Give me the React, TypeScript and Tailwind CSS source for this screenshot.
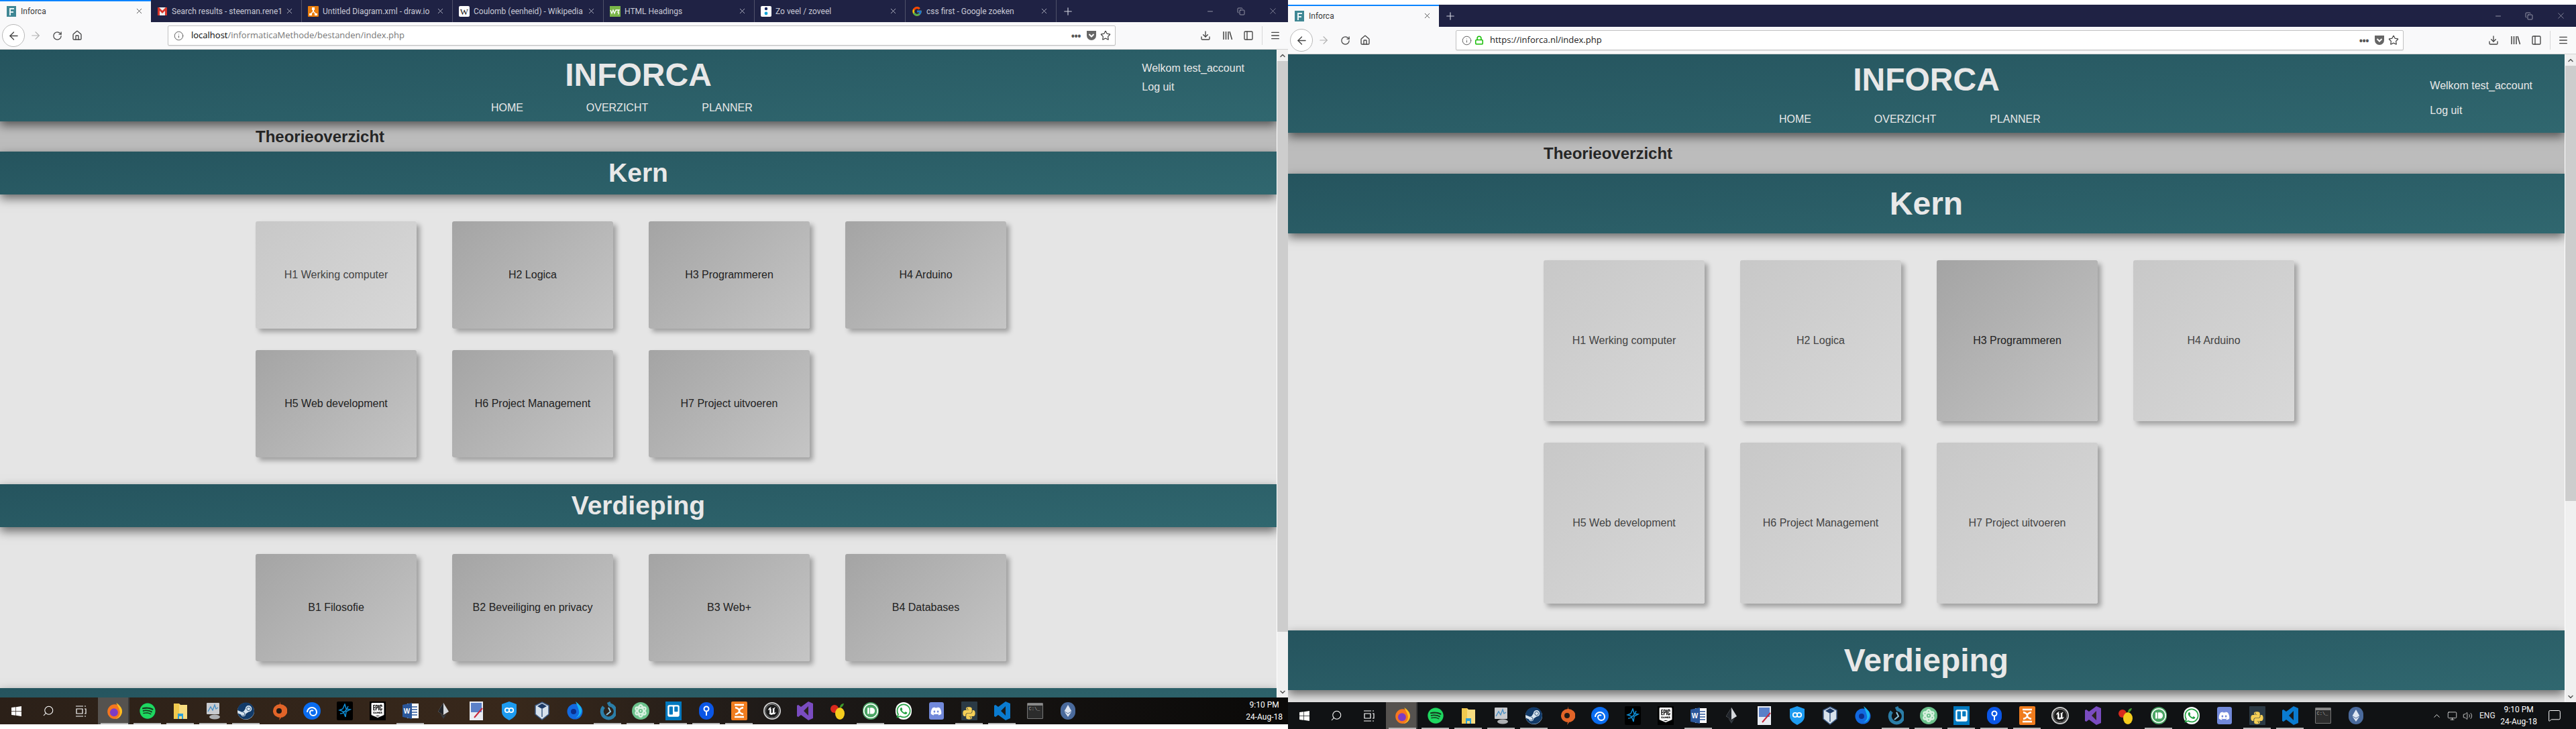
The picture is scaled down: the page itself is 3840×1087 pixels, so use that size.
import type { ReactNode } from 'react';
import { ArrowLeft, ArrowRight, RotateCw, Home, Info, Lock, Star, Download, PanelLeft, Menu, X, Plus, Minus, Copy, ChevronUp, ChevronDown, Search, Monitor, Volume2, MessageSquare } from 'lucide-react';
import { FaSpotify, FaSteam, FaWindows, FaTrello, FaWhatsapp, FaDiscord, FaPython, FaEthereum, FaAtom } from 'react-icons/fa';
import { FcGoogle } from 'react-icons/fc';
import { SiEpicgames, SiUnrealengine, SiPushbullet } from 'react-icons/si';

const Favicons = {
  inforca: (
    <svg width="16" height="16" viewBox="0 0 16 16"><rect x="1" width="14" height="16" fill="#3f8794" /><path d="M5 3h7v2H7v3h4v2H7v4H5z" fill="#e8f2f4" /></svg>
  ),
  gmail: (
    <svg width="16" height="16" viewBox="0 0 16 16"><rect x="1" y="2" width="14" height="12" fill="#eee" /><path d="M1 2h2l5 5 5-5h2v12h-3V7L8 11 4 7v7H1z" fill="#d8352a" /></svg>
  ),
  drawio: (
    <svg width="16" height="16" viewBox="0 0 16 16"><rect width="16" height="16" rx="1" fill="#e97d0d" /><path d="M6 2h4v4H9v2l3 3h2v3h-4v-3L8 9l-2 2v3H2v-3h2l3-3V6H6z" fill="#fff" /></svg>
  ),
  wiki: (
    <svg width="16" height="16" viewBox="0 0 16 16"><rect width="16" height="16" rx="2" fill="#fff" /><text x="8" y="13" fontSize="13" textAnchor="middle" fontFamily="'Liberation Serif', serif" fill="#111">W</text></svg>
  ),
  w3: (
    <svg width="16" height="16" viewBox="0 0 16 16"><rect width="16" height="16" fill="#7ab648" /><path d="M1 6l2 5 2-5 2 5 2-5h5l-2 3c2 0 2 3 0 3" stroke="#fff" strokeWidth="1.3" fill="none" /></svg>
  ),
  zoveel: (
    <svg width="16" height="16" viewBox="0 0 16 16"><rect width="16" height="16" rx="2" fill="#fff" /><circle cx="8" cy="4" r="2.2" fill="#14235c" /><circle cx="8" cy="11" r="2.4" fill="#12a5d8" /></svg>
  ),
};

function Tab({ icon, title, active }: { icon: ReactNode; title: string; active?: boolean }) {
  return (
    <div className={`relative flex h-full w-[225px] shrink-0 items-center pl-[9px] pr-[11px] ${active ? 'bg-[#f9f9fa] text-[#3a3a3a]' : 'border-r border-[#4f5169] text-[#c9cad6]'}`}>
      {active && <div className="absolute inset-x-0 top-0 h-[2px] bg-[#0a84ff]" />}
      <span className="w-[22px] shrink-0">{icon}</span>
      <span className="min-w-0 flex-1 overflow-hidden font-['Roboto',sans-serif] text-[12px] whitespace-nowrap">{title}</span>
      <X size={13} strokeWidth={1.5} className="ml-[4px] shrink-0" />
    </div>
  );
}

function WindowControls() {
  return (
    <div className="ml-auto flex items-center text-[#b9bac6]">
      <Minus size={12} strokeWidth={1.5} className="mr-[34px]" />
      <Copy size={12} strokeWidth={1.5} className="mr-[34px]" />
      <X size={15} strokeWidth={1} className="mr-[15px]" />
    </div>
  );
}

function Toolbar({ url }: { url: ReactNode }) {
  return (
    <div className="flex h-[41px] items-center border-b border-[#d4d4d4] bg-[#f9f9fa] text-[#444]">
      <div className="ml-[3px] flex h-[34px] w-[34px] items-center justify-center rounded-full border border-[#b8b8b8] bg-white">
        <ArrowLeft size={19} strokeWidth={1.7} />
      </div>
      <ArrowRight size={18} strokeWidth={1.5} className="ml-[7px] text-[#b0b0b0]" />
      <RotateCw size={15} strokeWidth={2} className="ml-[16px]" />
      <Home size={16} strokeWidth={2} className="ml-[14px]" />
      <div className="ml-[127px] flex h-[30px] w-[1413px] items-center rounded-[2px] border border-[#c2c2c2] bg-white pr-[6px] pl-[8px] font-['Open_Sans',sans-serif] text-[13px] shadow-[0_1px_1px_rgba(0,0,0,0.08)]">
        {url}
        <div className="ml-auto flex items-center">
          <span className="text-[14px] font-bold tracking-[-0.5px] text-[#555]">•••</span>
          <svg width="16" height="16" viewBox="0 0 16 16" className="ml-[8px]"><path d="M1 1h14v7a7 7 0 0 1-14 0z" fill="#666" /><path d="M4.5 6L8 9.5 11.5 6" stroke="#fff" strokeWidth="2" fill="none" /></svg>
          <Star size={16} strokeWidth={1.8} className="ml-[5px]" />
        </div>
      </div>
      <Download size={16} strokeWidth={2} className="ml-[126px]" />
      <svg width="16" height="16" viewBox="0 0 16 16" className="ml-[17px]" stroke="#444" strokeWidth="1.5" fill="none"><path d="M2 2v12M5.5 2v12M9 2v12M11 2l3.5 12" /></svg>
      <PanelLeft size={16} strokeWidth={2} className="ml-[15px]" />
      <div className="ml-[12px] h-[28px] w-px bg-[#d8d8d8]" />
      <Menu size={16} strokeWidth={2} className="ml-[11px]" />
    </div>
  );
}

function Card({ label, dark, tall }: { label: string; dark?: boolean; tall?: boolean }) {
  return (
    <div className={`flex w-[240px] items-center justify-center rounded-[3px] text-[16px] shadow-[5px_5px_7px_rgba(0,0,0,0.3)] ${tall ? 'h-[240px]' : 'h-[160px]'} ${dark ? 'bg-[linear-gradient(135deg,#a4a4a4,#c5c5c5)] text-[#222]' : 'bg-[linear-gradient(135deg,#c8c8c8,#d8d8d8)] text-[#444]'}`}>
      {label}
    </div>
  );
}

function Band({ title, big }: { title: string; big?: boolean }) {
  return (
    <div className={`relative z-10 flex items-center justify-center bg-[linear-gradient(176deg,#25545e,#30676f)] font-bold text-[#e8e8e8] shadow-[0_6px_14px_rgba(0,0,0,0.55)] ${big ? 'h-[89px] text-[48px]' : 'h-[64px] text-[39px]'}`}>
      {title}
    </div>
  );
}

function Scrollbar({ thumb }: { thumb: number }) {
  return (
    <div className="flex w-[17px] shrink-0 flex-col items-center border-l border-white bg-[#f0f0f0] text-[#555]">
      <div className="flex h-[17px] items-center"><ChevronUp size={12} strokeWidth={3} /></div>
      <div className="w-full bg-[#cdcdcd]" style={{ height: thumb }} />
      <div className="mt-auto flex h-[17px] items-center"><ChevronDown size={12} strokeWidth={3} /></div>
    </div>
  );
}

function Page({ big, darkCards }: { big?: boolean; darkCards: string[] }) {
  const kern = ['H1 Werking computer', 'H2 Logica', 'H3 Programmeren', 'H4 Arduino', 'H5 Web development', 'H6 Project Management', 'H7 Project uitvoeren'];
  const verdieping = ['B1 Filosofie', 'B2 Beveiliging en privacy', 'B3 Web+', 'B4 Databases'];
  const grid = 'grid grid-cols-[repeat(4,240px)] gap-x-[53px] gap-y-[32px] py-10 pl-[381px]';

  return (
    <div className="flex min-h-0 flex-1">
      <div className="min-w-0 flex-1 overflow-hidden bg-[#e5e5e5]">
        <header className={`relative z-10 grid grid-cols-[1fr_auto_1fr] bg-[linear-gradient(176deg,#25545e,#30676f)] text-[#e8e8e8] shadow-[0_6px_14px_rgba(0,0,0,0.55)] ${big ? 'h-[117px]' : 'h-[107px]'}`}>
          <div />
          <div className="flex flex-col items-center pt-[10px]">
            <div className="text-[48px] leading-[55px] font-bold">INFORCA</div>
            <nav className={`mr-[63px] flex text-[16px] leading-[18px] ${big ? 'mt-[23px]' : 'mt-[13px]'}`}>
              <span className="w-[164px] text-center">HOME</span>
              <span className="w-[164px] text-center">OVERZICHT</span>
              <span className="w-[164px] text-center">PLANNER</span>
            </nav>
          </div>
          <div className={`mr-[48px] flex flex-col justify-self-end text-[16px] leading-[18px] ${big ? 'gap-[19px] pt-[38px]' : 'gap-[10px] pt-[19px]'}`}>
            <span>Welkom test_account</span>
            <span>Log uit</span>
          </div>
        </header>
        <div className={`flex items-center bg-[#bcbcbc] pl-[381px] text-[24px] font-bold text-[#262626] ${big ? 'h-[61px]' : 'h-[45px]'}`}>
          Theorieoverzicht
        </div>
        <Band title="Kern" big={big} />
        <div className={grid}>
          {kern.map((k) => <Card key={k} label={k} tall={big} dark={darkCards.includes(k)} />)}
        </div>
        <Band title="Verdieping" big={big} />
        {/* the big window is scrolled off before these, nothing of them shows */}
        {!big && (
          <>
            <div className={grid}>
              {verdieping.map((k) => <Card key={k} label={k} dark={darkCards.includes(k)} />)}
            </div>
            <div className="relative z-10 h-[64px] bg-[linear-gradient(176deg,#25545e,#30676f)] shadow-[0_6px_14px_rgba(0,0,0,0.55)]" />
          </>
        )}
      </div>
      <Scrollbar thumb={big ? 649 : 851} />
    </div>
  );
}

function Glyph({ children, on }: { children: ReactNode; on?: boolean }) {
  return (
    <div className={`relative flex h-full w-[49px] shrink-0 items-center justify-center ${on ? 'after:absolute after:inset-x-[4px] after:bottom-0 after:h-[2px] after:bg-[#b5b5b5]' : ''}`}>
      {children}
    </div>
  );
}

const taskIcons: { node: ReactNode; on?: boolean }[] = [
  { on: true, node: <svg width="26" height="26" viewBox="0 0 24 24"><circle cx="12" cy="13" r="10" fill="#f5761f" /><circle cx="11" cy="14" r="5.5" fill="#7d3bc4" /><path d="M14 1c5 3 9 8 8 13-1 5-5 9-9 9 5-2 7-6 6-11-1-4-3-7-5-11z" fill="#ffbf1f" /></svg> },
  { on: true, node: <span className="flex h-[24px] w-[24px] items-center justify-center rounded-full bg-[#17381f]"><FaSpotify size={24} className="text-[#1ed760]" /></span> },
  { on: true, node: <svg width="24" height="28" viewBox="0 0 24 28"><path d="M2 3h8l2 2h10v21H2z" fill="#f7dc80" /><path d="M2 3h8v23H2z" fill="#f0c94e" /><path d="M8 18h8v8h-2v-4h-4v4H8z" fill="#2d9fd8" /></svg> },
  { on: true, node: <svg width="26" height="28" viewBox="0 0 26 28"><rect x="3" y="2" width="19" height="17" rx="1" fill="#c9cbcf" /><path d="M5 15l4-7 3 5 3-8 2 6 3-2" stroke="#4a90c4" strokeWidth="1.4" fill="none" /><ellipse cx="15" cy="23" rx="8" ry="3.5" fill="#aeb0b3" /></svg> },
  { on: true, node: <span className="flex h-[25px] w-[25px] items-center justify-center rounded-full bg-[#d6e3ee]"><FaSteam size={26} className="text-[#123a68]" /></span> },
  { node: <svg width="24" height="28" viewBox="0 0 24 28"><path d="M14 0l-1 4a11 10 0 1 0 2 20l-3 4 1-4A11 10 0 0 0 14 4z" fill="#e26428" /><circle cx="12" cy="14" r="4" fill="#1f1a16" /></svg> },
  { node: <span className="flex h-[26px] w-[26px] items-center justify-center rounded-full bg-[#0a6cf0]"><svg width="18" height="18" viewBox="0 0 18 18" fill="none" stroke="#fff" strokeWidth="2"><path d="M2 11a7 7 0 1 1 14 0 5 5 0 0 1-10 0 3 3 0 0 1 5-2" /></svg></span> },
  { node: <span className="flex h-[28px] w-[24px] items-center justify-center rounded-[2px] bg-black"><svg width="20" height="22" viewBox="0 0 20 22" fill="none" stroke="#0f8fd8" strokeWidth="1.5"><path d="M10 1L7 8l-5 2 6 2 3 8 1-8 6-3-6-1zM3 15c4 1 10-5 12-11" /></svg></span> },
  { node: <span className="flex h-[28px] w-[24px] items-center justify-center bg-black pb-[2px]"><SiEpicgames size={22} className="text-white" /></span> },
  { on: true, node: <svg width="26" height="26" viewBox="0 0 26 26"><rect x="8" y="2" width="17" height="22" fill="#fff" /><path d="M13 7h10M13 11h10M13 15h10M13 19h10" stroke="#2b579a" strokeWidth="1.5" /><path d="M1 4l14-3v24L1 22z" fill="#2b579a" /><text x="7.5" y="16.5" fontSize="10" fontWeight="700" fill="#fff" textAnchor="middle" fontFamily="'Liberation Sans', sans-serif">W</text></svg> },
  { node: <svg width="22" height="26" viewBox="0 0 22 26"><path d="M11 1l8 13-8 5-8-5z" fill="#d5d8dc" /><path d="M11 1v18l-8-5z" fill="#20242a" /><path d="M6 17l5 3 5-3-5 8z" fill="#353a40" /></svg> },
  { node: <svg width="22" height="28" viewBox="0 0 22 28"><rect x="1" width="20" height="28" fill="#e9ecf2" /><rect x="3" y="2" width="16" height="14" fill="#5a80c8" /><path d="M8 24l12-14" stroke="#c8283c" strokeWidth="2" /></svg> },
  { node: <svg width="24" height="28" viewBox="0 0 24 28"><path d="M12 0l11 4v11c0 6-5 10-11 13C6 25 1 21 1 15V4z" fill="#1d9bf0" /><circle cx="9" cy="13" r="3.2" fill="none" stroke="#fff" strokeWidth="1.8" /><circle cx="15" cy="13" r="3.2" fill="none" stroke="#fff" strokeWidth="1.8" /></svg> },
  { node: <svg width="24" height="28" viewBox="0 0 24 28"><path d="M12 1l10 5v13l-10 8-10-8V6z" fill="#d8e2ec" stroke="#3c5a84" strokeWidth="1.5" /><path d="M12 3l7 4-7 4-7-4z" fill="#1e3a66" /><path d="M12 11v12" stroke="#3c5a84" strokeWidth="1.5" /></svg> },
  { node: <svg width="24" height="28" viewBox="0 0 24 28"><circle cx="12" cy="15" r="11.5" fill="#1269e0" /><path d="M13 0c5 4 10 8 9 15-1 5-5 9-9 9 4-2 6-6 5-10-1-5-3-9-5-14z" fill="#19b4ef" /><circle cx="10" cy="15" r="4" fill="#0b2f8c" /></svg> },
  { on: true, node: <svg width="24" height="28" viewBox="0 0 24 28" fill="none"><path d="M13 1l2 4a10 10 0 1 1-9 3" stroke="#2b7ea8" strokeWidth="5" /><path d="M13 9l3 6-6 5" stroke="#8cc5df" strokeWidth="2" /></svg> },
  { on: true, node: <span className="flex h-[26px] w-[26px] items-center justify-center rounded-full bg-[#6cc28c]"><FaAtom size={20} className="text-[#d8f0df]" /></span> },
  { on: true, node: <span className="flex h-[28px] w-[24px] items-center justify-center bg-[#0079bf]"><FaTrello size={20} className="text-white" /></span> },
  { on: true, node: <span className="flex h-[26px] w-[22px] items-center justify-center rounded-full bg-[#0a56e6]"><svg width="12" height="16" viewBox="0 0 12 16"><circle cx="6" cy="5" r="3.5" fill="none" stroke="#fff" strokeWidth="2" /><path d="M6 9v6" stroke="#fff" strokeWidth="2" /></svg></span> },
  { on: true, node: <span className="flex h-[28px] w-[24px] items-center justify-center rounded-[2px] bg-[#f07c1e]"><svg width="18" height="22" viewBox="0 0 18 22" fill="none" stroke="#fff" strokeWidth="2.4"><path d="M2 2h14M2 20h14M3 6c8 2 8 8 0 10M15 6c-8 2-8 8 0 10" /></svg></span> },
  { node: <span className="flex h-[26px] w-[26px] items-center justify-center rounded-full border-2 border-[#ccc] bg-[#1a1a1a]"><SiUnrealengine size={20} className="text-white" /></span> },
  { node: <svg width="24" height="28" viewBox="0 0 24 28"><path d="M17 0l7 3v22l-7 3-11-8-4 3-2-1V6l2-1 4 3z" fill="#7a4cc0" /><path d="M17 7v14l-7-7z" fill="#2b2420" /></svg> },
  { node: <svg width="24" height="28" viewBox="0 0 24 28"><circle cx="7" cy="11" r="6" fill="#d8291e" /><ellipse cx="15" cy="18" rx="7" ry="9" fill="#f4cc1d" /><path d="M15 9c0-4 3-6 6-6-1 4-3 6-6 6z" fill="#3f9a2d" /></svg> },
  { on: true, node: <span className="flex h-[26px] w-[24px] items-center justify-center rounded-full bg-[#4aa564]"><SiPushbullet size={22} className="text-white" /></span> },
  { node: <span className="flex h-[26px] w-[24px] items-center justify-center rounded-full bg-white"><FaWhatsapp size={24} className="text-[#25a244]" /></span> },
  { node: <span className="flex h-[26px] w-[22px] items-center justify-center rounded-[3px] bg-[#7289da]"><FaDiscord size={17} className="text-white" /></span> },
  { on: true, node: <span className="relative flex h-[28px] w-[24px] items-end justify-center rounded-[1px] bg-[#2b3a45]"><FaPython size={21} className="text-[#f5cf56]" /></span> },
  { on: true, node: <svg width="24" height="28" viewBox="0 0 24 28"><path d="M17 0l7 3v22l-7 3-11-8-4 3-2-1V6l2-1 4 3z" fill="#0a7bd0" /><path d="M17 7v14l-7-7z" fill="#1b1b1b" /></svg> },
  { node: <span className="flex h-[24px] w-[24px] flex-col rounded-[1px] border border-[#777] bg-[#2c2c2c]"><span className="h-[3px] bg-[#8a8a8a]" /><span className="pl-[2px] font-['Liberation_Mono',monospace] text-[7px] leading-[10px] text-[#aaa]">C:\_</span></span> },
  { node: <span className="flex h-[26px] w-[22px] items-center justify-center rounded-full bg-[#4a6a9c]"><FaEthereum size={18} className="text-[#dfe6f2]" /></span> },
];

function Taskbar({ tray, left }: { tray?: boolean; left?: boolean }) {
  return (
    <div className={`flex h-[40px] shrink-0 items-center text-white ${left ? 'bg-[linear-gradient(90deg,#2b2018,#38281b_40%,#1e1a18_60%,#0a0908)]' : 'bg-[#101214]'}`}>
      <div className="flex h-full w-[48px] items-center justify-center"><FaWindows size={17} /></div>
      <div className="flex h-full w-[48px] items-center justify-center"><Search size={18} strokeWidth={1.4} className="-scale-x-100" /></div>
      <div className="flex h-full w-[48px] items-center justify-center">
        <svg width="17" height="17" viewBox="0 0 17 17" fill="none" stroke="#fff" strokeWidth="1.2"><path d="M1 1h11M1 16h11M2 5h9v7H2zM14 1h2M14 5h2v7h-2M14 16h2" /></svg>
      </div>
      <div className="ml-[2px] flex h-full w-[1470px] shrink-0">
        {taskIcons.map((t, i) => (
          <div key={i} className={i === 0 ? 'h-full w-[49px] bg-[linear-gradient(90deg,#55524f_45px,#3a3a3a_45px,#3a3a3a_47px,transparent_47px)]' : 'h-full w-[49px]'}>
            <Glyph on={t.on}>{t.node}</Glyph>
          </div>
        ))}
      </div>
      {tray && (
        <div className="ml-[89px] flex shrink-0 items-center text-[#ececec]">
          <ChevronUp size={15} strokeWidth={1.5} />
          <Monitor size={15} strokeWidth={1.3} className="ml-[8px]" />
          <Volume2 size={15} strokeWidth={1.3} className="ml-[8px]" />
          <span className="ml-[10px] font-['Roboto',sans-serif] text-[12px]">ENG</span>
        </div>
      )}
      <div className="ml-auto flex shrink-0 flex-col items-center font-['Roboto',sans-serif] text-[12px] leading-[18px] whitespace-nowrap text-white">
        <span>9:10 PM</span>
        <span>24-Aug-18</span>
      </div>
      {tray ? <MessageSquare size={20} strokeWidth={1.2} className="mr-[22px] ml-[16px] shrink-0" /> : <div className="w-[8px] shrink-0" />}
    </div>
  );
}

export default function App() {
  const urlStyle = 'whitespace-nowrap';
  return (
    <div className="flex h-[1087px] w-[3840px] overflow-hidden bg-white font-['Liberation_Sans',Arial,sans-serif]">
      {/* local copy */}
      <div className="flex h-[1087px] w-[1920px] shrink-0 flex-col pb-[7px]">
        <div className="flex h-[33px] shrink-0 items-center bg-[#1f2244]">
          <Tab active icon={Favicons.inforca} title="Inforca" />
          <Tab icon={Favicons.gmail} title="Search results - steeman.rene1" />
          <Tab icon={Favicons.drawio} title="Untitled Diagram.xml - draw.io" />
          <Tab icon={Favicons.wiki} title="Coulomb (eenheid) - Wikipedia" />
          <Tab icon={Favicons.w3} title="HTML Headings" />
          <Tab icon={Favicons.zoveel} title="Zo veel / zoveel" />
          <Tab icon={<FcGoogle size={16} />} title="css first - Google zoeken" />
          <Plus size={18} strokeWidth={1.5} className="ml-[8px] text-[#d5d6e0]" />
          <WindowControls />
        </div>
        <Toolbar url={
          <>
            <Info size={15} strokeWidth={1.5} className="mr-[11px] text-[#555]" />
            <span className={urlStyle}><span className="text-black">localhost</span><span className="text-[#777]">/informaticaMethode/bestanden/index.php</span></span>
          </>
        } />
        <Page darkCards={['H2 Logica', 'H3 Programmeren', 'H4 Arduino', 'H5 Web development', 'H6 Project Management', 'H7 Project uitvoeren', 'B1 Filosofie', 'B2 Beveiliging en privacy', 'B3 Web+', 'B4 Databases']} />
        <Taskbar left />
      </div>

      {/* live site */}
      <div className="flex h-[1087px] w-[1920px] shrink-0 flex-col pt-[7px]">
        <div className="flex h-[33px] shrink-0 items-center bg-[#1f2244]">
          <Tab active icon={Favicons.inforca} title="Inforca" />
          <Plus size={18} strokeWidth={1.5} className="ml-[8px] text-[#d5d6e0]" />
          <WindowControls />
        </div>
        <Toolbar url={
          <>
            <Info size={15} strokeWidth={1.5} className="mr-[4px] text-[#555]" />
            <Lock size={14} strokeWidth={2.5} className="mr-[9px] text-[#12bc00]" />
            <span className={`${urlStyle} text-[#222]`}>https://inforca.nl/index.php</span>
          </>
        } />
        <Page big darkCards={['H3 Programmeren']} />
        <Taskbar tray />
      </div>
    </div>
  );
}
